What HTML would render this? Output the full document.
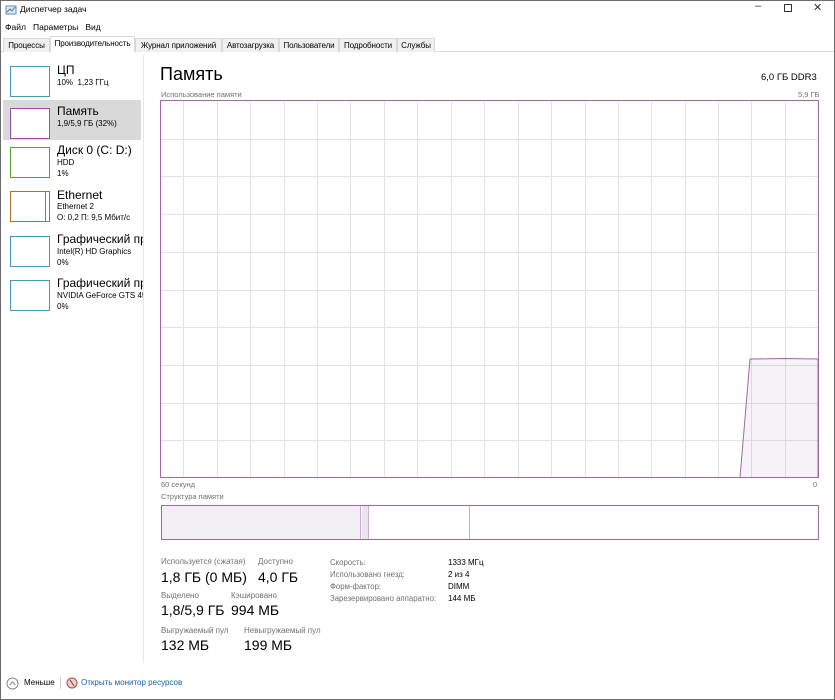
<!DOCTYPE html>
<html><head><meta charset="utf-8"><style>
*{margin:0;padding:0;box-sizing:border-box}
body{width:835px;height:700px;overflow:hidden;background:#fff;font-family:"Segoe UI","Liberation Sans","DejaVu Sans",sans-serif;color:#000;position:relative;font-size:8.5px}
.a{position:absolute;white-space:nowrap}
.win{position:absolute;left:0;top:0;width:835px;height:700px;border:1px solid #6b6b6b}
.tab{position:absolute;top:38px;height:14px;font-size:8px;line-height:13px;text-align:center;overflow:hidden;background:#f0f0f0;border:1px solid #d9d9d9;border-bottom:none;letter-spacing:-0.1px}
.thumb{position:absolute;left:10px;width:40px;height:31px;border:1px solid}
.g{color:#707070}
.big{font-size:12px}
.sm{font-size:8px}
</style></head><body>
<div class="win"></div>
<svg class="a" style="left:5px;top:4px" width="12" height="12"><rect x="1" y="2" width="10" height="8" fill="#dfe8ee" stroke="#6a8aa0"/><polyline points="2,8 5,5 7,7 10,3" fill="none" stroke="#3a7ab0"/></svg>
<div class="a" style="left:20px;top:4px;font-size:8.5px">Диспетчер задач</div>
<div class="a" style="left:755px;top:0px;font-size:11px;color:#333">&#8211;</div>
<div class="a" style="left:784px;top:4px;width:8px;height:8px;border:1px solid #333"></div>
<div class="a" style="left:813px;top:1px;font-size:11px;color:#333">&#10005;</div>
<div class="a" style="left:5px;top:22px;font-size:8.5px">Файл&nbsp;&nbsp;&nbsp;Параметры&nbsp;&nbsp;&nbsp;Вид</div>
<div class="a" style="left:1px;top:51px;width:833px;height:1px;background:#d9d9d9"></div>
<div class="tab" style="left:3px;width:47px">Процессы</div>
<div class="a" style="left:50px;top:36px;height:16px;width:85px;background:#fff;border:1px solid #d9d9d9;border-bottom:none;font-size:8px;padding-top:2px;text-align:center;overflow:hidden;letter-spacing:-0.1px">Производительность</div>
<div class="tab" style="left:135px;width:87px">Журнал приложений</div>
<div class="tab" style="left:222px;width:57px">Автозагрузка</div>
<div class="tab" style="left:279px;width:60px">Пользователи</div>
<div class="tab" style="left:339px;width:58px">Подробности</div>
<div class="tab" style="left:397px;width:38px">Службы</div>
<div class="a" style="left:143px;top:55px;width:1px;height:608px;background:#e6e6e6"></div>
<div class="a" style="left:3px;top:100px;width:138px;height:40px;background:#d9d9d9"></div>
<div class="thumb" style="top:66px;border-color:#4a9ab5"></div>
<div class="a big" style="left:57px;top:63px">ЦП</div><div class="a sm" style="left:57px;top:78px">10%&nbsp; 1,23 ГГц</div>
<div class="thumb" style="top:108px;border-color:#9b4fa5;background:#fff"></div>
<div class="a big" style="left:57px;top:104px">Память</div><div class="a sm" style="left:57px;top:119px">1,9/5,9 ГБ (32%)</div>
<div class="thumb" style="top:147px;border-color:#5aa02c"></div>
<div class="a big" style="left:57px;top:143px">Диск 0 (C: D:)</div><div class="a sm" style="left:57px;top:158px">HDD</div><div class="a sm" style="left:57px;top:169px">1%</div>
<div class="thumb" style="top:191px;border-color:#a7742c"></div>
<div class="a" style="left:45px;top:191px;width:1px;height:31px;background:#a7742c"></div>
<div class="a big" style="left:57px;top:188px">Ethernet</div><div class="a sm" style="left:57px;top:202px">Ethernet 2</div><div class="a sm" style="left:57px;top:213px">О: 0,2 П: 9,5 Мбит/с</div>
<div class="thumb" style="top:236px;border-color:#4a9ab5"></div>
<div class="a big" style="left:57px;top:232px;width:86px;overflow:hidden">Графический процессор</div><div class="a sm" style="left:57px;top:247px">Intel(R) HD Graphics</div><div class="a sm" style="left:57px;top:258px">0%</div>
<div class="thumb" style="top:280px;border-color:#4a9ab5"></div>
<div class="a big" style="left:57px;top:276px;width:86px;overflow:hidden">Графический процессор</div><div class="a sm" style="left:57px;top:291px;width:86px;overflow:hidden">NVIDIA GeForce GTS 450</div><div class="a sm" style="left:57px;top:302px">0%</div>
<div class="a" style="left:160px;top:64px;font-size:18px">Память</div>
<div class="a" style="left:761px;top:72px;font-size:9.5px">6,0 ГБ DDR3</div>
<div class="a g" style="left:161px;top:90px;font-size:7.5px">Использование памяти</div>
<div class="a g" style="left:798px;top:90px;font-size:7.5px">5,9 ГБ</div>
<svg class="a" style="left:160px;top:100px" width="660" height="380">
<g stroke="#e3e3e3" stroke-width="1">
<line x1="23.5" y1="1" x2="23.5" y2="378"/><line x1="57.5" y1="1" x2="57.5" y2="378"/><line x1="90.5" y1="1" x2="90.5" y2="378"/><line x1="124.5" y1="1" x2="124.5" y2="378"/><line x1="157.5" y1="1" x2="157.5" y2="378"/><line x1="190.5" y1="1" x2="190.5" y2="378"/><line x1="224.5" y1="1" x2="224.5" y2="378"/><line x1="257.5" y1="1" x2="257.5" y2="378"/><line x1="291.5" y1="1" x2="291.5" y2="378"/><line x1="324.5" y1="1" x2="324.5" y2="378"/><line x1="358.5" y1="1" x2="358.5" y2="378"/><line x1="391.5" y1="1" x2="391.5" y2="378"/><line x1="425.5" y1="1" x2="425.5" y2="378"/><line x1="458.5" y1="1" x2="458.5" y2="378"/><line x1="491.5" y1="1" x2="491.5" y2="378"/><line x1="525.5" y1="1" x2="525.5" y2="378"/><line x1="558.5" y1="1" x2="558.5" y2="378"/><line x1="591.5" y1="1" x2="591.5" y2="378"/><line x1="625.5" y1="1" x2="625.5" y2="378"/>
<line x1="1" y1="39.5" x2="658" y2="39.5"/><line x1="1" y1="76.5" x2="658" y2="76.5"/><line x1="1" y1="114.5" x2="658" y2="114.5"/><line x1="1" y1="152.5" x2="658" y2="152.5"/><line x1="1" y1="190.5" x2="658" y2="190.5"/><line x1="1" y1="227.5" x2="658" y2="227.5"/><line x1="1" y1="265.5" x2="658" y2="265.5"/><line x1="1" y1="303.5" x2="658" y2="303.5"/><line x1="1" y1="340.5" x2="658" y2="340.5"/>
</g>
<polygon points="580,377.5 590,259 625,258.5 658,259 658,377.5" fill="rgba(150,80,160,0.08)" stroke="#9b6aa5" stroke-width="1"/>
<rect x="0.5" y="0.5" width="658" height="377" fill="none" stroke="#9b6aa5"/>
</svg>
<div class="a g" style="left:161px;top:480px;font-size:7.5px">60 секунд</div>
<div class="a g" style="left:813px;top:480px;font-size:7.5px">0</div>
<div class="a g" style="left:161px;top:492px;font-size:7.5px">Структура памяти</div>
<div class="a" style="left:161px;top:505px;width:658px;height:35px;border:1px solid #9b6aa5;background:#fff"></div>
<div class="a" style="left:162px;top:506px;width:199px;height:33px;background:#f3eef4;border-right:1px solid #c8b0cc"></div>
<div class="a" style="left:362px;top:506px;width:7px;height:33px;background:#ece4ee;border-right:1px solid #c8b0cc"></div>
<div class="a" style="left:469px;top:506px;width:1px;height:33px;background:#c8b0cc"></div>
<div class="a g sm" style="left:161px;top:557px">Используется (сжатая)</div>
<div class="a g sm" style="left:258px;top:557px">Доступно</div>
<div class="a" style="left:161px;top:569px;font-size:14px">1,8 ГБ (0 МБ)</div>
<div class="a" style="left:258px;top:569px;font-size:14px">4,0 ГБ</div>
<div class="a g sm" style="left:161px;top:591px">Выделено</div>
<div class="a g sm" style="left:231px;top:591px">Кэшировано</div>
<div class="a" style="left:161px;top:602px;font-size:14px">1,8/5,9 ГБ</div>
<div class="a" style="left:231px;top:602px;font-size:14px">994 МБ</div>
<div class="a g sm" style="left:161px;top:626px">Выгружаемый пул</div>
<div class="a g sm" style="left:244px;top:626px">Невыгружаемый пул</div>
<div class="a" style="left:161px;top:637px;font-size:14px">132 МБ</div>
<div class="a" style="left:244px;top:637px;font-size:14px">199 МБ</div>
<div class="a g" style="left:330px;top:557px;line-height:12px;font-size:7.8px">Скорость:<br>Использовано гнезд:<br>Форм-фактор:<br>Зарезервировано аппаратно:</div>
<div class="a" style="left:448px;top:557px;line-height:12px;font-size:8px">1333 МГц<br>2 из 4<br>DIMM<br>144 МБ</div>
<svg class="a" style="left:6px;top:677px" width="13" height="13"><circle cx="6.5" cy="6.5" r="5.5" fill="none" stroke="#888"/><polyline points="3.5,8 6.5,5 9.5,8" fill="none" stroke="#888"/></svg>
<div class="a sm" style="left:24px;top:678px">Меньше</div>
<div class="a" style="left:60px;top:677px;width:1px;height:12px;background:#ccc"></div>
<svg class="a" style="left:66px;top:677px" width="12" height="12"><circle cx="6" cy="6" r="5" fill="#e8d0d0" stroke="#a05050"/><line x1="4" y1="3" x2="8" y2="9" stroke="#a03030"/></svg>
<div class="a sm" style="left:81px;top:678px;color:#1a5fb4">Открыть монитор ресурсов</div>
</body></html>
